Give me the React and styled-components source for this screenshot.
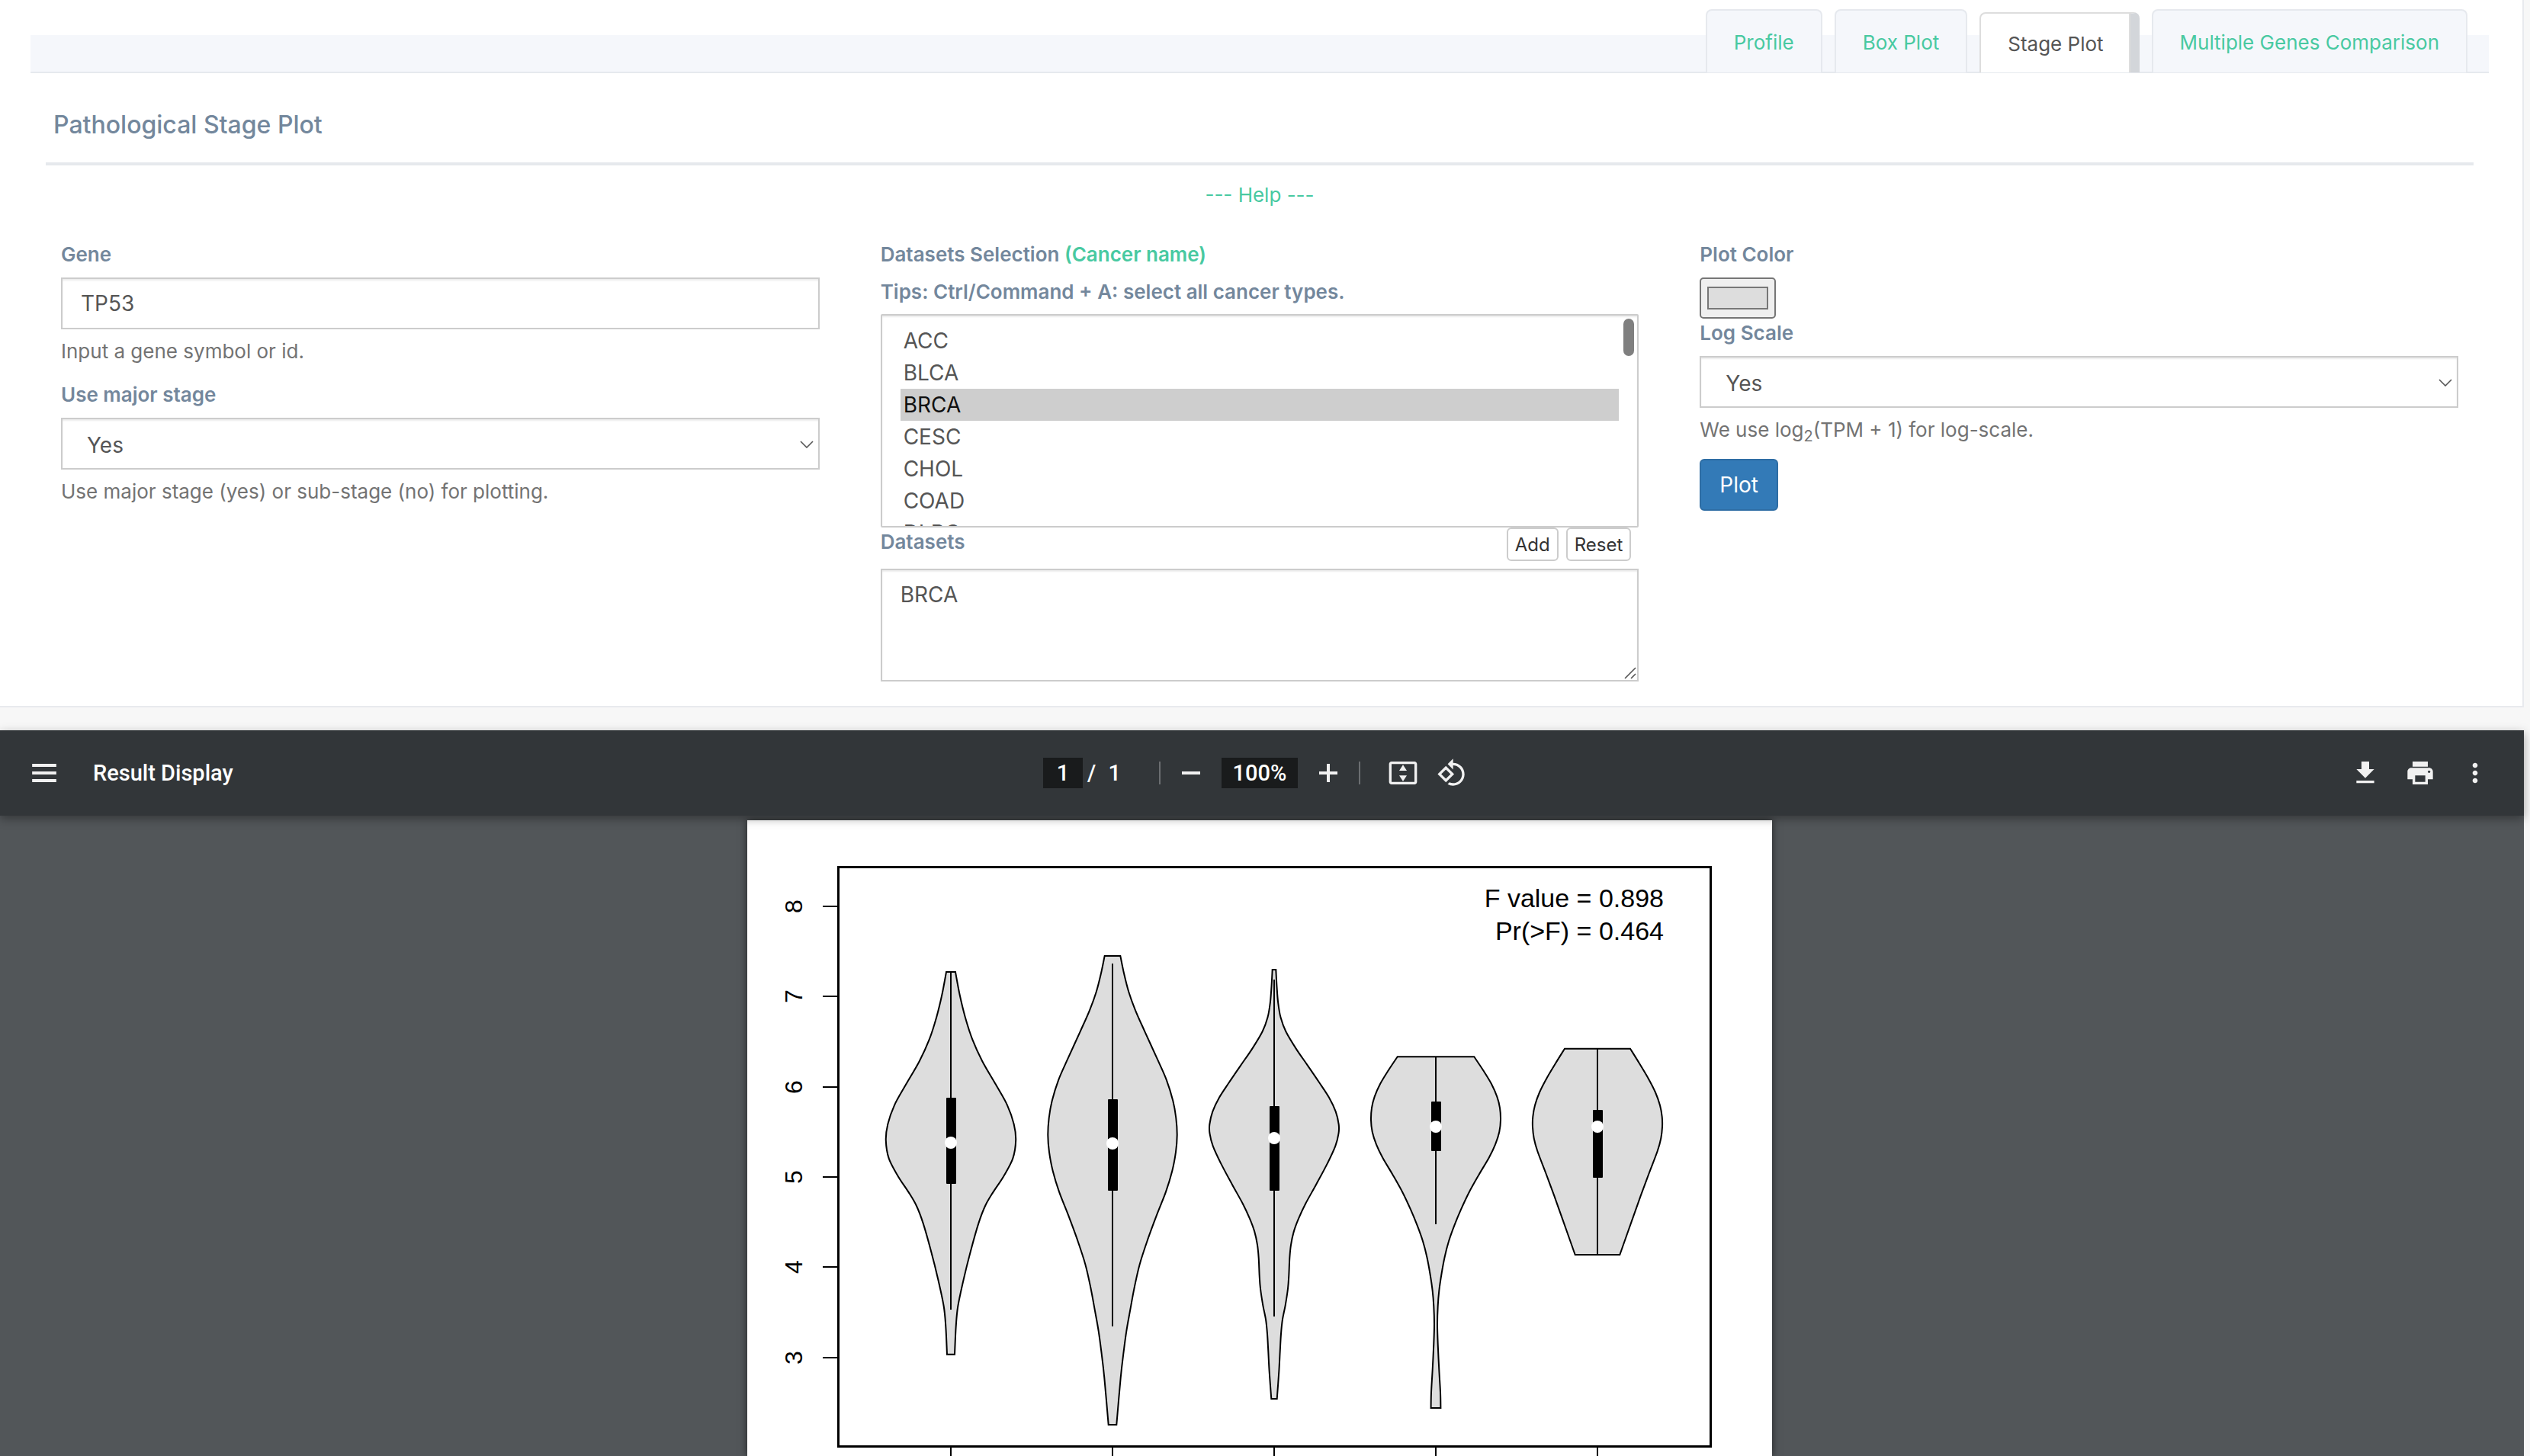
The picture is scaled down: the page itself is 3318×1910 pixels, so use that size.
// src/App.jsx
import React, { useState } from 'react';
import styled, { createGlobalStyle } from 'styled-components';

const CANCERS = [
  'ACC', 'BLCA', 'BRCA', 'CESC', 'CHOL', 'COAD', 'DLBC', 'ESCA', 'GBM', 'HNSC', 'KICH',
  'KIRC', 'KIRP', 'LAML', 'LGG', 'LIHC', 'LUAD', 'LUSC', 'MESO', 'OV', 'PAAD', 'PCPG',
  'PRAD', 'READ', 'SARC', 'SKCM', 'STAD', 'TGCT', 'THCA', 'THYM', 'UCEC', 'UCS', 'UVM',
];

const TABS = ['Profile', 'Box Plot', 'Stage Plot', 'Multiple Genes Comparison'];

// y position of every axis value in the plot
const TICKS = [
  { value: 8, y: 113 },
  { value: 7, y: 231 },
  { value: 6, y: 350 },
  { value: 5, y: 468 },
  { value: 4, y: 586 },
  { value: 3, y: 705 },
];

// outline: [y, half width] from the top of the violin to its bottom
const VIOLINS = [
  {
    x: 267, whisker: [199, 642], box: [364, 477], median: 423,
    outline: [
      [199.1, 6], [229.3, 11.7], [257.9, 18.7], [287.7, 28.3], [316.2, 41.3], [347.3, 59.3],
      [373.8, 74], [398.7, 82.7], [419.9, 85.2], [443.6, 81.3], [466.9, 69.3], [488.1, 55.3],
      [506, 45], [528.9, 36.3], [564, 26.3], [602.4, 16.7], [637.5, 9.3], [664, 6.7], [700.7, 5],
    ],
  },
  {
    x: 479, whisker: [188, 664], box: [366, 486], median: 424,
    outline: [
      [177.9, 10.3], [200.7, 15], [225.2, 21.3], [249.3, 30], [277.1, 42.3], [312.2, 58.3],
      [340.3, 70.7], [368.1, 79.3], [390.5, 83.3], [413, 84.7], [435.4, 83], [459.9, 78.3],
      [487.3, 70], [517.1, 58.3], [549.7, 46.3], [582.4, 35.7], [613, 28.7], [643.6, 23],
      [670.1, 18.3], [696.7, 14.7], [731.3, 10.7], [793, 5.3],
    ],
  },
  {
    x: 691, whisker: [209, 651], box: [375, 486], median: 417,
    outline: [
      [195.9, 2.3], [218.4, 3.5], [239.5, 5.2], [258.6, 8.5], [277, 15.3], [299.6, 28.7],
      [321.4, 43.7], [344.3, 59.3], [363.8, 72], [382.2, 80.7], [399, 84.7], [410.9, 84.5],
      [427.4, 80.3], [449.9, 70], [477.5, 55.3], [502.8, 41.3], [522.7, 32], [539.9, 25.7],
      [557.1, 22], [574.3, 20.3], [597.3, 19.3], [614.5, 18], [636.3, 14.7], [654.7, 11],
      [673.8, 9], [696.8, 7.7], [723.5, 6.3], [759.1, 3.7],
    ],
  },
  {
    x: 903, whisker: [310, 530], box: [369, 434], median: 402,
    outline: [
      [310.3, 50.3], [328.3, 62.3], [346, 73], [362.7, 80.3], [377.3, 84], [393.3, 85],
      [408.7, 83.3], [425.3, 78], [442.7, 69.7], [464.7, 56.7], [488, 43.7], [510.7, 33],
      [531.7, 24.3], [552.3, 17], [572.7, 11.7], [594, 7.7], [617.3, 4.3], [637.3, 2.7],
      [660.7, 2], [687.3, 2.7], [720.7, 4.3], [750.7, 6], [771, 6.4],
    ],
  },
  {
    x: 1115, whisker: [300, 570], box: [380, 469], median: 402,
    outline: [
      [299.7, 43], [319, 55], [338.7, 66.7], [357, 76], [374, 82], [389, 84.7], [402.3, 85],
      [417.3, 83.3], [434, 78.7], [463, 67.7], [492.7, 56.7], [525.7, 45], [570, 29.3],
    ],
  },
];

// Catmull-Rom spline through the points, written as bezier segments
const curve = (pts) =>
  pts
    .slice(1)
    .map((p, i) => {
      const a = pts[i - 1] || pts[i];
      const b = pts[i];
      const d = pts[i + 2] || p;
      const c1 = [b[0] + (p[0] - a[0]) / 6, b[1] + (p[1] - a[1]) / 6];
      const c2 = [p[0] - (d[0] - b[0]) / 6, p[1] - (d[1] - b[1]) / 6];
      return `C${c1.join(' ')} ${c2.join(' ')} ${p.join(' ')}`;
    })
    .join('');

const violinPath = ({ x, outline }) => {
  const right = outline.map(([y, w]) => [x + w, y]);
  const left = outline.map(([y, w]) => [x - w, y]).reverse();
  return `M${right[0].join(' ')}${curve(right)}L${left[0].join(' ')}${curve(left)}Z`;
};

function StagePlot({ color }) {
  return (
    <Chart viewBox="0 0 1344 834" role="img" aria-label="Violin plot by pathological stage">
      <g fill="none" stroke="#000" strokeWidth="2">
        {TICKS.map((t) => (
          <path key={t.value} d={`M99 ${t.y}H119`} />
        ))}
        {VIOLINS.map((v) => (
          <path key={v.x} d={`M${v.x} 821V834`} />
        ))}
        <rect x="119.5" y="61.5" width="1144" height="760" strokeWidth="3" />
      </g>
      {TICKS.map((t) => (
        <text key={t.value} transform={`translate(72 ${t.y}) rotate(-90)`} fontSize="32" textAnchor="middle">
          {t.value}
        </text>
      ))}
      <text x="1202" y="114" fontSize="34" textAnchor="end">F value = 0.898</text>
      <text x="1202" y="157" fontSize="34" textAnchor="end">Pr(&gt;F) = 0.464</text>
      {VIOLINS.map((v) => (
        <g key={v.x}>
          <path d={violinPath(v)} fill={color} stroke="#000" strokeWidth="2" />
          <path d={`M${v.x} ${v.whisker[0]}V${v.whisker[1]}`} stroke="#000" strokeWidth="2" />
          <rect x={v.x - 6} y={v.box[0]} width="13" height={v.box[1] - v.box[0]} rx="1" />
          <circle cx={v.x} cy={v.median} r="8" fill="#fff" />
        </g>
      ))}
    </Chart>
  );
}

function Icon({ d }) {
  return (
    <svg width="40" height="40" viewBox="0 0 24 24" fill="#f1f1f1" aria-hidden="true">
      <path d={d} />
    </svg>
  );
}

const ICONS = {
  menu: 'M2.5 4.8h19v2.4h-19zM2.5 10.8h19v2.4h-19zM2.5 16.8h19v2.4h-19z',
  minus: 'M4.8 10.8h14.4v2.4H4.8z',
  plus: 'M10.8 4.8h2.4v6h6v2.4h-6v6h-2.4v-6h-6v-2.4h6z',
  fit: 'M21 3H3c-1.1 0-2 .9-2 2v14c0 1.1.9 2 2 2h18c1.1 0 2-.9 2-2V5c0-1.1-.9-2-2-2zm0 16H3V5h18v14zM12 5.6l-3 4.6h6zM12 18.6l3-4.6H9z',
  rotate:
    'M7.34 6.41L.86 12.9l6.49 6.48 6.49-6.48-6.5-6.49zM3.69 12.9l3.66-3.66L11 12.9l-3.66 3.66-3.65-3.66zm15.67-6.26C17.61 4.88 15.3 4 13 4V.76L8.76 5 13 9.24V6c1.79 0 3.58.68 4.95 2.05 2.73 2.73 2.73 7.17 0 9.9C16.58 19.32 14.79 20 13 20c-.97 0-1.94-.21-2.84-.61l-1.49 1.49C10.02 21.62 11.51 22 13 22c2.3 0 4.61-.88 6.36-2.64 3.52-3.51 3.52-9.21 0-12.72z',
  download: 'M19 9h-4V3H9v6H5l7 7 7-7zM5 18v2h14v-2H5z',
  print:
    'M19 8H5c-1.66 0-3 1.34-3 3v6h4v4h12v-4h4v-6c0-1.66-1.34-3-3-3zm-3 11H8v-5h8v5zm3-7c-.55 0-1-.45-1-1s.45-1 1-1 1 .45 1 1-.45 1-1 1zm-1-9H6v4h12V3z',
  more: 'M12 8c1.1 0 2-.9 2-2s-.9-2-2-2-2 .9-2 2 .9 2 2 2zm0 2c-1.1 0-2 .9-2 2s.9 2 2 2 2-.9 2-2-.9-2-2-2zm0 6c-1.1 0-2 .9-2 2s.9 2 2 2 2-.9 2-2-.9-2-2-2z',
};

function YesNo({ id, value, onChange }) {
  return (
    <SelectWrap>
      <Select id={id} value={value} onChange={(e) => onChange(e.target.value)}>
        <option>Yes</option>
        <option>No</option>
      </Select>
      <Chevron width="18" height="10" viewBox="0 0 18 10">
        <path d="M1 1l8 8 8-8" fill="none" stroke="#555" strokeWidth="1.6" />
      </Chevron>
    </SelectWrap>
  );
}

function App() {
  const [tab, setTab] = useState('Stage Plot');
  const [gene, setGene] = useState('TP53');
  const [major, setMajor] = useState('Yes');
  const [logScale, setLogScale] = useState('Yes');
  const [picked, setPicked] = useState(['BRCA']);
  const [datasets, setDatasets] = useState('BRCA');
  const [color, setColor] = useState('#dddddd');
  const [page, setPage] = useState('1');

  return (
    <Shell>
      <GlobalStyle />
      <Panel>
        <TabStrip>
          {TABS.map((name) => (
            <Tab key={name} href="#" $active={name === tab} onClick={() => setTab(name)}>
              {name}
            </Tab>
          ))}
        </TabStrip>
        <Title>Pathological Stage Plot</Title>
        <Help href="#help">--- Help ---</Help>
        <Form onSubmit={(e) => e.preventDefault()}>
          <Column>
            <Label htmlFor="gene">Gene</Label>
            <Input id="gene" value={gene} onChange={(e) => setGene(e.target.value)} />
            <Hint>Input a gene symbol or id.</Hint>
            <Label htmlFor="major">Use major stage</Label>
            <YesNo id="major" value={major} onChange={setMajor} />
            <Hint>Use major stage (yes) or sub-stage (no) for plotting.</Hint>
          </Column>
          <Column>
            <Label htmlFor="cancers">
              Datasets Selection <a href="#cancers">(Cancer name)</a>
            </Label>
            <Tips>Tips: Ctrl/Command + A: select all cancer types.</Tips>
            <ListWrap>
              <List
                id="cancers"
                multiple
                value={picked}
                onChange={(e) => setPicked([...e.target.selectedOptions].map((o) => o.value))}
              >
                {CANCERS.map((c) => (
                  <option key={c}>{c}</option>
                ))}
              </List>
              <Thumb />
            </ListWrap>
            <DatasetsRow>
              <Label htmlFor="datasets">Datasets</Label>
              <SmallButton type="button" onClick={() => setDatasets(picked.join('\n'))}>Add</SmallButton>
              <SmallButton type="button" onClick={() => setDatasets('')}>Reset</SmallButton>
            </DatasetsRow>
            <AreaWrap>
              <TextArea id="datasets" value={datasets} onChange={(e) => setDatasets(e.target.value)} />
              <Grip width="16" height="16" viewBox="0 0 16 16">
                <path d="M1 15L15 1M9 15l6-6" stroke="#555" strokeWidth="1.6" />
              </Grip>
            </AreaWrap>
          </Column>
          <Column>
            <Label htmlFor="color">Plot Color</Label>
            <ColorInput id="color" type="color" value={color} onChange={(e) => setColor(e.target.value)} />
            <Label htmlFor="log">Log Scale</Label>
            <YesNo id="log" value={logScale} onChange={setLogScale} />
            <Hint>
              We use log<sub>2</sub>(TPM + 1) for log-scale.
            </Hint>
            <PlotButton type="submit">Plot</PlotButton>
          </Column>
        </Form>
      </Panel>

      <Viewer>
        <Toolbar>
          <ToolGroup>
            <IconButton aria-label="Menu"><Icon d={ICONS.menu} /></IconButton>
            <FileName>Result Display</FileName>
          </ToolGroup>
          <ToolGroup>
            <PageInput aria-label="Page number" value={page} onChange={(e) => setPage(e.target.value)} />
            <Slash>/</Slash>
            <span>1</span>
            <Divider $before={50} $after={8} />
            <IconButton $narrow aria-label="Zoom out"><Icon d={ICONS.minus} /></IconButton>
            <ZoomInput aria-label="Zoom level" defaultValue="100%" />
            <IconButton $narrow aria-label="Zoom in"><Icon d={ICONS.plus} /></IconButton>
            <Divider $before={8} $after={24} />
            <IconButton $narrow aria-label="Fit to page"><Icon d={ICONS.fit} /></IconButton>
            <IconButton $narrow aria-label="Rotate"><Icon d={ICONS.rotate} /></IconButton>
          </ToolGroup>
          <ToolGroup $end>
            <IconButton aria-label="Download"><Icon d={ICONS.download} /></IconButton>
            <IconButton aria-label="Print"><Icon d={ICONS.print} /></IconButton>
            <IconButton aria-label="More actions"><Icon d={ICONS.more} /></IconButton>
          </ToolGroup>
        </Toolbar>
        <Stage>
          <Sheet>
            <StagePlot color={color} />
          </Sheet>
        </Stage>
      </Viewer>
    </Shell>
  );
}

const GlobalStyle = createGlobalStyle`
  * {
    box-sizing: border-box;
  }

  body {
    margin: 0;
    font-family: Inter, 'Liberation Sans', sans-serif;
    font-size: 26px;
    line-height: 37px;
    color: #737373;
  }

  a {
    color: #48c9a1;
    text-decoration: none;
  }

  input, select, textarea, button {
    font-family: inherit;
  }
`;

const Shell = styled.div`
  display: flex;
  flex-direction: column;
  height: 100vh;
  padding-right: 8px;
  overflow: hidden;
  background: #f7f7f7;
`;

const Panel = styled.section`
  flex: none;
  padding: 46px 0 32px;
  margin-bottom: 30px;
  background: #fff;
  border: solid #e8eaee;
  border-width: 0 2px 2px 0;
`;

const TabStrip = styled.nav`
  display: flex;
  justify-content: flex-end;
  align-items: flex-end;
  gap: 16px;
  height: 50px;
  margin: 0 44px 0 40px;
  padding-right: 28px;
  background: #f5f7fb;
  border-bottom: 2px solid #e6e9ee;
`;

const Tab = styled.a`
  flex: none;
  height: ${(p) => (p.$active ? 79 : 83)}px;
  margin-bottom: -1px;
  padding: ${(p) => (p.$active ? 20 : 22)}px 35px 0;
  line-height: 40px;
  color: ${(p) => (p.$active ? '#555' : '#48c9a1')};
  background: ${(p) => (p.$active ? '#fff' : '#f5f7fb')};
  border: 2px solid ${(p) => (p.$active ? '#ddd' : '#e6e9ee')};
  border-bottom: 0;
  border-radius: 8px 8px 0 0;
  ${(p) => p.$active && 'border-right: 12px solid #d3d6da; box-shadow: inset -2px 0 #ddd;'}
`;

const Title = styled.h2`
  margin: 36px 64px 0 60px;
  padding: 10px 10px 27px;
  border-bottom: 4px solid #e6e9ed;
  font-size: 32px;
  font-weight: 500;
  line-height: 44px;
  color: #73879c;
`;

const Help = styled.a`
  display: block;
  margin: 20px 44px 0 40px;
  text-align: center;
`;

const Form = styled.form`
  display: grid;
  grid-template-columns: repeat(3, 1fr);
  gap: 80px;
  margin: 41px 84px 0 80px;
`;

const Column = styled.div`
  display: flex;
  flex-direction: column;
  align-items: stretch;
  min-width: 0;
`;

const Label = styled.label`
  margin: 0 0 12px;
  font-weight: 600;
  color: #73879c;
`;

const Tips = styled.p`
  margin: 0 0 11px;
  font-weight: 600;
  color: #73879c;
`;

const Hint = styled.p`
  margin: 10px 0 20px;

  sub {
    font-size: 20px;
    line-height: 0;
  }
`;

const Input = styled.input`
  width: 100%;
  height: 68px;
  padding: 0 24px;
  font-size: 28px;
  color: #555;
  background: #fff;
  border: 2px solid #ccc;
  box-shadow: inset 0 2px 2px rgba(0, 0, 0, 0.08);
`;

const SelectWrap = styled.div`
  position: relative;
`;

const Select = styled(Input).attrs({ as: 'select' })`
  display: block;
  padding: 4px 32px 0;
  appearance: none;
`;

const Chevron = styled.svg`
  position: absolute;
  top: 30px;
  right: 8px;
  pointer-events: none;
`;

const ListWrap = styled.div`
  position: relative;
`;

const List = styled(Input).attrs({ as: 'select' })`
  display: block;
  height: 280px;
  padding: 12px 24px;
  scrollbar-width: none;

  option {
    min-height: 42px;
    padding: 4px 4px 0;
    line-height: 38px;
  }

  option:checked {
    color: #101010;
    background: #cecece linear-gradient(#cecece, #cecece);
  }
`;

const Thumb = styled.span`
  position: absolute;
  top: 6px;
  right: 6px;
  width: 14px;
  height: 49px;
  background: #7f7f7f;
  border-radius: 7px;
`;

const DatasetsRow = styled.div`
  display: flex;
  align-items: flex-start;
  gap: 10px;
  height: 54px;
  padding-right: 10px;

  ${Label} {
    margin-right: auto;
  }
`;

const SmallButton = styled.button`
  height: 44px;
  padding: 0 9px;
  font-size: 24px;
  color: #333;
  background: #fff;
  border: 2px solid #ccc;
  border-radius: 6px;
`;

const AreaWrap = styled.div`
  position: relative;
`;

const TextArea = styled(Input).attrs({ as: 'textarea' })`
  display: block;
  height: 148px;
  padding: 12px 24px;
  line-height: 40px;
  resize: none;
`;

const Grip = styled.svg`
  position: absolute;
  right: 3px;
  bottom: 3px;
  pointer-events: none;
`;

const ColorInput = styled.input`
  width: 100px;
  height: 54px;
  padding: 10px 8px;
  background: #efefef;
  border: 2px solid #767676;
  border-radius: 5px;
  appearance: none;

  &::-webkit-color-swatch-wrapper {
    padding: 0;
  }

  &::-webkit-color-swatch {
    border: 2px solid #777;
    border-radius: 0;
  }
`;

const PlotButton = styled.button`
  align-self: flex-start;
  height: 68px;
  padding: 0 24px;
  font-size: 28px;
  color: #fff;
  background: #337ab7;
  border: 2px solid #2e6da4;
  border-radius: 6px;
`;

const Viewer = styled.section`
  display: flex;
  flex: 1;
  flex-direction: column;
  min-height: 0;
  background: #525659;
`;

const Toolbar = styled.header`
  display: grid;
  grid-template-columns: 1fr auto 1fr;
  align-items: center;
  flex: none;
  height: 112px;
  padding: 0 28px 0 22px;
  font-family: Roboto, sans-serif;
  font-size: 29px;
  font-weight: 500;
  color: #fff;
  background: #323639;
  box-shadow: 0 4px 12px rgba(0, 0, 0, 0.35);
  z-index: 1;
`;

const ToolGroup = styled.div`
  display: flex;
  align-items: center;
  justify-content: ${(p) => (p.$end ? 'flex-end' : 'flex-start')};
`;

const IconButton = styled.button`
  display: grid;
  place-items: center;
  width: ${(p) => (p.$narrow ? 64 : 72)}px;
  height: 72px;
  padding: 0;
  background: none;
  border: 0;
`;

const FileName = styled.span`
  margin-left: 28px;
`;

const PageInput = styled.input`
  width: 52px;
  height: 40px;
  padding: 0;
  font-size: 29px;
  font-weight: 500;
  text-align: center;
  color: #fff;
  background: #191b1c;
  border: 0;
`;

const ZoomInput = styled(PageInput)`
  width: 100px;
  margin: 0 8px;
`;

const Slash = styled.span`
  margin: 0 16px 0 6px;
`;

const Divider = styled.span`
  width: 2px;
  height: 30px;
  margin: 0 ${(p) => p.$after}px 0 ${(p) => p.$before}px;
  background: #6b6e71;
`;

const Stage = styled.div`
  flex: 1;
  min-height: 0;
  padding: 6px 6px 0 0;
  overflow: hidden;
`;

const Sheet = styled.div`
  max-width: 1344px;
  height: 100%;
  margin: 0 auto;
  background: #fff;
  box-shadow: 0 0 10px rgba(0, 0, 0, 0.6);
`;

const Chart = styled.svg`
  display: block;
  width: 100%;
  font-family: 'Liberation Sans', sans-serif;
`;

export default App;
